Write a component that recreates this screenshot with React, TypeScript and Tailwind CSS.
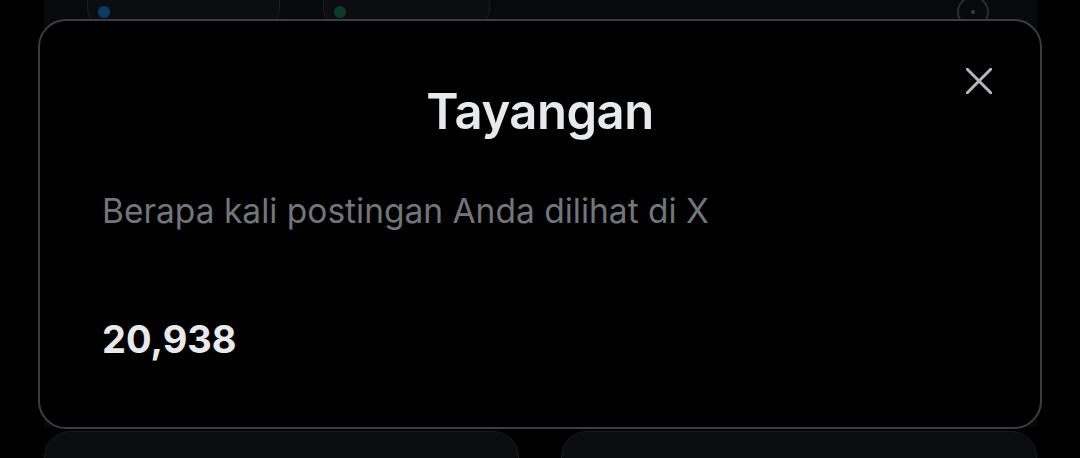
import React from 'react';

const font = { fontFamily: 'Inter, "Liberation Sans", sans-serif' };

const App: React.FC = () => {
  return (
    <div className="relative w-[1080px] h-[458px] overflow-hidden bg-black" style={font}>
      {/* page behind the dialog */}
      <div className="flex flex-col gap-[4px] pl-[44px] w-[1037px]">
        <div className="flex items-start h-[427px] bg-[#08090b] pl-[43px] pr-[48px]">
          <div className="flex items-center gap-2 w-[193px] h-[50px] -mt-[20px] pl-[10px] rounded-[22px] border border-[#1b1d21] bg-[#0c0d10]">
            <span className="mt-[14px] w-[12px] h-[12px] rounded-full bg-[#0c3a66]" />
          </div>
          <div className="flex items-center gap-2 ml-[43px] w-[167px] h-[50px] -mt-[20px] pl-[10px] rounded-[22px] border border-[#1b1d21] bg-[#0c0d10]">
            <span className="mt-[14px] w-[12px] h-[12px] rounded-full bg-[#0b3a2c]" />
          </div>
          <div className="ml-auto -mt-[4px] w-[32px] h-[32px] rounded-full border-2 border-[#2a2c30] flex items-center justify-center">
            <span className="w-[4px] h-[4px] rounded-full bg-[#3a3c40]" />
          </div>
        </div>
        <div className="flex gap-[42px]">
          <div className="w-[475px] h-[60px] rounded-t-[26px] border border-[#1a1c1f] bg-[#0b0c0e]" />
          <div className="w-[476px] h-[60px] rounded-t-[26px] border border-[#1a1c1f] bg-[#0b0c0e]" />
        </div>
      </div>

      {/* dialog */}
      <div className="absolute left-[38px] top-[19px] w-[1004px] h-[410px] rounded-[28px] border-2 border-[#3b3d40] bg-black">
        <button className="absolute right-[44px] top-[43px] w-[34px] h-[34px] flex items-center justify-center">
          <svg width="26" height="26" viewBox="0 0 26 26" fill="none">
            <path d="M1 1 25 25M25 1 1 25" stroke="#b3b6ba" strokeWidth="3" strokeLinecap="round" />
          </svg>
        </button>
        <div className="flex flex-col px-[62px] pt-[61px]">
          <h2 className="text-center text-[49px] leading-[60px] font-semibold tracking-[-0.5px] text-[#e7e9ea]">
            Tayangan
          </h2>
          <p className="mt-[49px] text-[33.5px] leading-[40px] text-[#71767b]">
            Berapa kali postingan Anda dilihat di X
          </p>
          <p className="mt-[85px] text-[38px] leading-[46px] font-bold text-[#e7e9ea]">20,938</p>
        </div>
      </div>
    </div>
  );
};

export default App;
